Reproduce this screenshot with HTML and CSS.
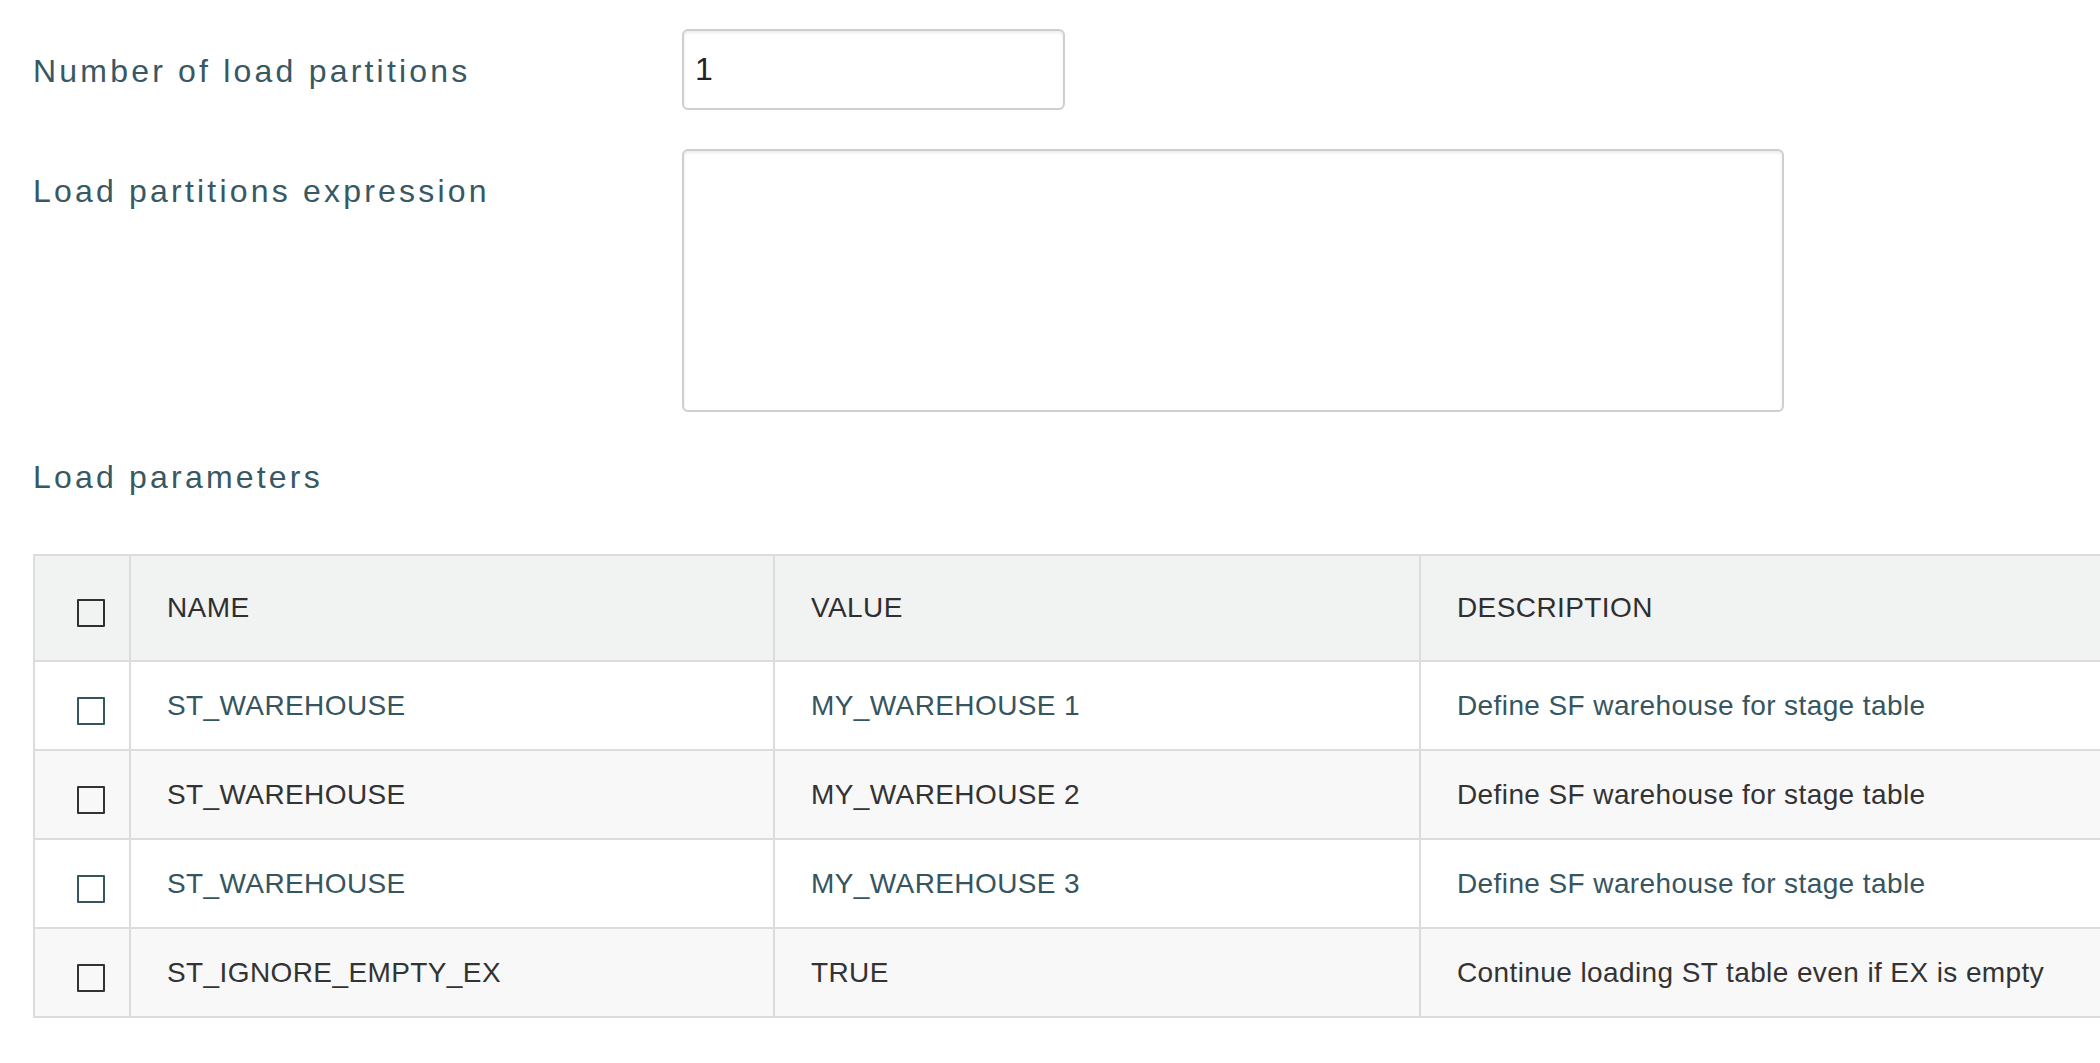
FILE: index.html
```html
<!DOCTYPE html>
<html lang="en">
<head>
<meta charset="utf-8">
<title>Load settings</title>
<link rel="stylesheet" href="styles.css">
</head>
<body>
<div class="page">
  <div class="form-row">
    <label class="field-label" for="partitions">Number of load partitions</label>
    <input id="partitions" class="text-input" type="text" value="1">
  </div>
  <div class="form-row form-row-gap">
    <label class="field-label" for="expression">Load partitions expression</label>
    <textarea id="expression" class="text-area"></textarea>
  </div>
  <div class="section-label">Load parameters</div>
  <div class="table-wrap">
    <table class="params">
      <thead>
        <tr>
          <th class="col-check"><span class="checkbox"></span></th>
          <th class="col-name">NAME</th>
          <th class="col-value">VALUE</th>
          <th class="col-desc">DESCRIPTION</th>
        </tr>
      </thead>
      <tbody>
        <tr class="row-accent">
          <td class="col-check"><span class="checkbox"></span></td>
          <td>ST_WAREHOUSE</td>
          <td>MY_WAREHOUSE 1</td>
          <td>Define SF warehouse for stage table</td>
        </tr>
        <tr class="row-alt">
          <td class="col-check"><span class="checkbox"></span></td>
          <td>ST_WAREHOUSE</td>
          <td>MY_WAREHOUSE 2</td>
          <td>Define SF warehouse for stage table</td>
        </tr>
        <tr class="row-accent">
          <td class="col-check"><span class="checkbox"></span></td>
          <td>ST_WAREHOUSE</td>
          <td>MY_WAREHOUSE 3</td>
          <td>Define SF warehouse for stage table</td>
        </tr>
        <tr class="row-alt">
          <td class="col-check"><span class="checkbox"></span></td>
          <td>ST_IGNORE_EMPTY_EX</td>
          <td>TRUE</td>
          <td>Continue loading ST table even if EX is empty</td>
        </tr>
      </tbody>
    </table>
  </div>
</div>
</body>
</html>
```

FILE: styles.css
```css
html, body {
  margin: 0;
  padding: 0;
  background: #ffffff;
  overflow: hidden;
}

.page {
  padding: 29px 0 0 32px;
  font-family: "Liberation Sans", Arial, sans-serif;
}

.form-row {
  display: grid;
  grid-template-columns: 650px auto;
  align-items: start;
}

.form-row-gap {
  margin-top: 39px;
}

.field-label,
.section-label {
  font-size: 32px;
  line-height: 36px;
  letter-spacing: 3.2px;
  color: #385863;
  padding-left: 1px;
}

.field-label {
  padding-top: 24px;
}

.text-input,
.text-area {
  box-sizing: border-box;
  border: 2px solid #cfcfcf;
  border-radius: 6px;
  box-shadow: inset 0 2px 3px rgba(0, 0, 0, 0.08);
  background: #ffffff;
  font-family: "Liberation Sans", Arial, sans-serif;
  font-size: 32px;
  color: #222222;
  outline: none;
  margin: 0;
}

.text-input {
  width: 383px;
  height: 81px;
  padding: 0 11px;
}

.text-area {
  display: block;
  width: 1102px;
  height: 263px;
  padding: 10px;
  resize: none;
}

.section-label {
  margin-top: 47px;
}

.table-wrap {
  margin-top: 59px;
  margin-left: 1px;
  overflow: hidden;
}

.params {
  border-collapse: separate;
  border-spacing: 0;
  table-layout: fixed;
  width: 2107px;
  border-top: 2px solid #dcdcdc;
  border-left: 2px solid #dcdcdc;
  font-family: "Liberation Sans", Arial, sans-serif;
  font-size: 28px;
  letter-spacing: 0.4px;
}

.params th,
.params td {
  box-sizing: border-box;
  padding: 0 0 0 36px;
  border-right: 2px solid #dcdcdc;
  border-bottom: 2px solid #dcdcdc;
  text-align: left;
  vertical-align: middle;
  font-weight: normal;
  white-space: nowrap;
}

.params th {
  height: 106px;
  background: #f1f2f2;
  color: #2f2f2f;
}

.params td {
  height: 89px;
  color: #333333;
}

.params .col-check {
  width: 96px;
  padding-left: 42px;
}

.params .col-name {
  width: 644px;
}

.params .col-value {
  width: 646px;
}

.params .col-desc {
  width: 721px;
}

.row-accent td {
  background: #ffffff;
  color: #36555f;
}

.row-alt td {
  background: #f8f8f8;
  color: #333333;
}

.checkbox {
  display: block;
  box-sizing: border-box;
  width: 28px;
  height: 28px;
  margin-top: 10px;
  border: 2px solid currentColor;
  border-radius: 1px;
}
```
